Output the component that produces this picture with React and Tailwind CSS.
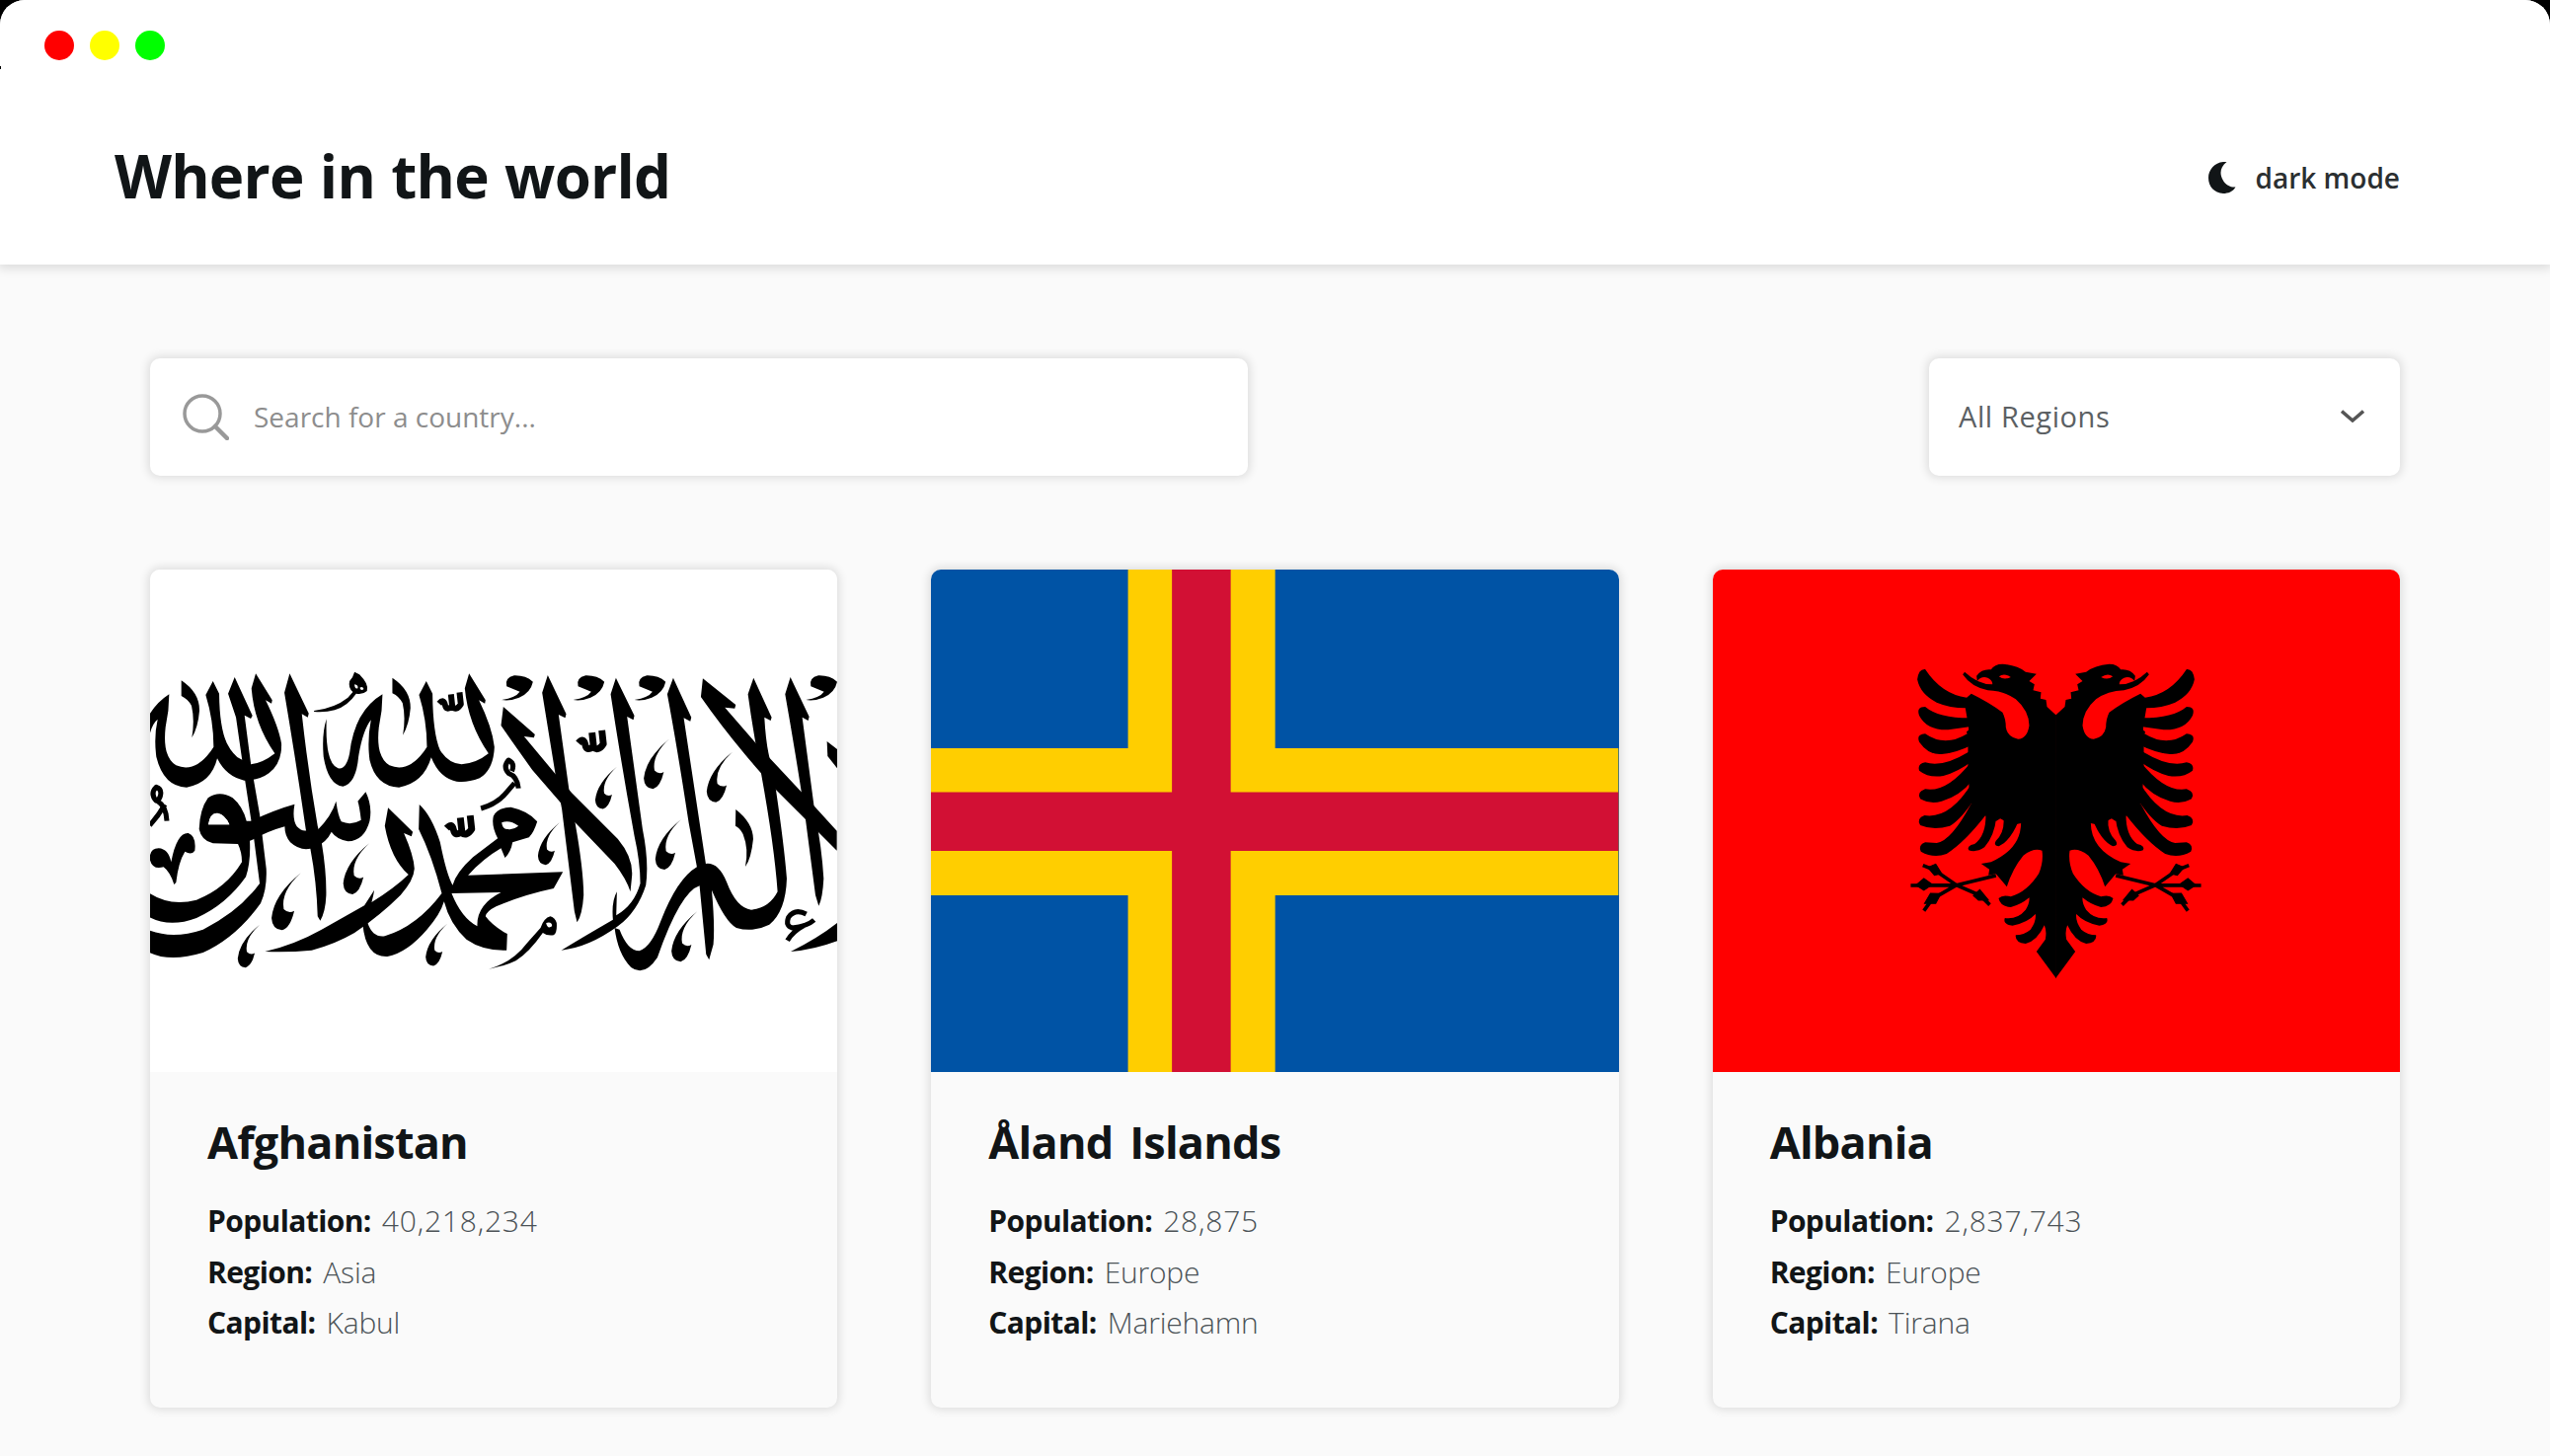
const COMMA =
  'M497 733Q435 790 445 843Q460 858 477 848Q465 900 440 907Q410 905 408 870Q415 800 497 733Z';

// x, y of the tip and scale of each comma-shaped mark
const COMMAS = [
  [497, 733, 1],
  [705, 643, 0.89],
  [372, 890, 0.75],
  [942, 887, 0.74],
  [1617, 325, 0.88],
  [1457, 410, 0.74],
  [1808, 365, 0.88],
  [1283, 580, 0.74],
  [1652, 570, 0.88],
  [1701, 850, 0.88],
];

const HOOK = 'M87 207Q130 200 142 182L102 166Q95 140 125 133Q160 132 182 152Q175 185 140 200Q110 212 87 207Z';
const DAGGER = 'M134 148Q190 185 189 240Q185 290 166 322Q175 270 165 225Q155 205 134 195Z';
const SHADDA = 'M0 36Q14 20 18 40Q22 60 40 44L36 8M38 46Q52 60 66 38L62 2';

const LEFT_STROKES = [
  'M38 250Q62 212 97 190Q97 240 86 290Q76 380 118 406Q180 432 232 350Q232 270 208 192L230 150L249 188Q250 290 272 338Q292 378 316 388L345 403Q380 400 418 370Q355 280 347 172L360 127L410 208L408 218L390 208Q430 290 438 340Q440 400 400 430Q370 452 325 452Q270 440 243 385Q225 460 150 473Q80 470 58 380Q50 320 62 266Q45 280 38 312Z',
  'M276 188L296 138L350 255L345 264L326 254L345 400L372 555L392 720Q395 780 375 825Q300 930 200 975Q100 1005 38 975L38 908Q110 935 200 905Q310 850 372 765L355 632L328 455L300 260Z',
  'M188 600Q190 540 215 505Q250 480 290 505Q320 530 332 575L345 575Q420 540 478 524Q470 570 485 592Q500 608 515 604L548 602Q590 560 604 515Q610 560 620 577Q650 590 680 572Q675 530 670 515L694 487Q715 530 706 575Q690 635 640 637Q605 630 590 608Q575 640 540 655Q500 672 465 640Q448 620 448 592Q400 605 350 632L342 635Q345 700 330 745Q270 830 180 870Q100 900 38 868L38 795Q100 835 180 815Q270 780 318 700Q318 670 306 645L230 643Q195 635 188 600ZM216 586L280 586Q268 556 243 551Q220 552 216 586Z',
  'M447 185L463 127L521 248L518 260L500 250Q520 430 548 590L560 640Q575 730 574 800Q572 850 556 878L548 865Q545 760 526 660L512 600Q480 380 447 185Z',
  'M575 265Q570 400 610 415Q635 420 645 370Q660 240 745 190Q745 240 734 290Q724 380 766 406Q828 432 880 350Q880 270 856 192L878 150L897 188Q898 310 920 360Q945 400 985 403Q1030 400 1067 370Q1005 280 995 172L1008 127L1058 208L1056 218L1038 208Q1078 290 1085 350Q1082 420 1040 445Q1000 460 970 455Q918 445 893 382Q870 460 795 473Q725 470 706 390Q698 330 710 268Q685 300 672 380Q665 460 625 470Q580 465 566 380Q560 310 575 265Z',
  'M38 690Q38 658 65 658Q95 660 103 700Q120 610 155 612Q180 620 175 665Q165 680 145 668Q125 700 118 762L112 768Q100 730 80 715Q45 725 38 690Z',
  'M752 590L762 535L837 608L833 622L810 612Q840 680 842 720Q840 755 800 800Q740 860 660 915Q600 950 530 968Q460 975 388 972Q480 950 560 905L690 832L720 785Q718 800 712 822Q780 780 824 738Q770 690 752 590Z',
  'M537 240Q600 232 640 200L655 183Q640 170 645 150Q655 140 660 122L675 130Q705 160 698 180Q685 192 665 188Q640 225 600 238Q570 246 537 243ZM660 160Q660 175 670 172Q672 162 660 160ZM676 170Q680 182 688 174Q685 164 676 170Z',
];

const RIGHT_STROKES = [
  'M-335 890L-320 885Q-305 930 -268 925Q-170 895 -95 795Q-125 680 -165 600L-163 525Q-125 560 -100 640Q-80 740 -62 770Q-50 730 0 685L75 628Q55 590 62 560Q75 535 115 533Q170 545 195 577Q185 610 170 625L120 640Q115 670 97 687L85 658Q30 690 -15 740L273 730L245 780Q150 800 70 835Q40 850 38 865Q60 895 104 918L102 968Q30 970 -20 935Q-70 890 -88 820Q-100 860 -140 905Q-200 975 -260 987Q-325 990 -335 890ZM-65 795Q-35 870 13 895Q10 830 85 792ZM87 580Q90 603 106 600Q122 603 138 590Q110 570 87 580Z',
  'M48 1025Q120 1005 165 945L205 900Q215 870 235 865Q250 870 254 885Q256 915 245 922Q225 925 212 915Q170 975 130 1000Q100 1015 48 1025ZM222 885Q226 905 240 895Q240 880 222 885Z',
  'M85 285L92 228L188 312L185 322L155 318L250 432L300 490L440 630Q490 690 482 750L478 790Q465 750 430 705L310 580L265 518L180 420Q130 350 85 285Z',
  'M210 185L227 132L283 250L280 262L260 252L293 490L310 580Q335 720 336 800Q332 860 316 883L308 850L270 540L250 432Z',
  'M418 190L434 140L490 255L487 268L468 258L515 600Q535 700 525 770Q500 850 440 895Q350 960 268 968Q330 930 425 875Q420 820 437 790L435 862Q490 830 508 765Q508 700 490 620Q450 400 418 190Z',
  'M430 900L445 905Q470 970 505 970Q540 960 570 880Q620 750 680 715L655 580Q620 350 590 190L608 140L663 260L660 272L640 262L707 705Q745 700 770 760Q800 840 845 845Q900 840 925 790Q915 650 875 430Q850 300 835 190L852 140L907 260L904 270L885 260Q890 350 905 400L920 480Q945 650 953 750Q950 850 900 890Q850 915 800 900Q765 880 725 785Q735 890 730 950L717 997L708 980L688 772Q630 790 560 990Q520 1050 480 1020Q440 980 430 900Z',
  'M692 198L698 142L798 222L795 233L765 230L862 342L1000 490L1105 605L1105 665L1010 570L920 480L875 430Q770 310 692 198Z',
  'M948 190L964 138L1021 258L1018 270L1000 260L1037 540Q1060 660 1065 750Q1062 810 1050 833L1040 800L1010 570Q985 400 948 190Z',
  'M1075 333L1110 360V420L1077 378Z',
  'M798 540Q850 580 851 630Q845 690 827 714Q838 660 820 615Q810 595 797 590Z',
  'M965 972Q1050 930 1110 882V938Q1040 965 965 972Z',
];

const FINE_LINES = [
  'M90 575Q88 530 62 515M84 525Q64 560 38 588M58 514Q38 492 58 472Q76 478 70 500Q66 512 58 514Z',
  'M1044 537Q1095 522 1122 488L1146 460M1158 476Q1155 440 1128 430Q1110 410 1128 390Q1148 400 1138 424',
  'M2032 858Q1998 840 1978 868Q1968 895 1990 900Q2035 895 2056 876M2026 892Q1990 912 1975 938',
];

function AfghanistanFlag() {
  return (
    <svg viewBox="0 0 696 509" preserveAspectRatio="none" className="block h-full w-full bg-white">
      <g transform="translate(-13 63) scale(.33333)" fillRule="evenodd" fill="#000">
        {LEFT_STROKES.map((d) => <path key={d} d={d} fillRule="nonzero" />)}
        <path d="M216 586L280 586Q268 556 243 551Q220 552 216 586Z" fill="#fff" />
        <path d={DAGGER} />
        <path d={DAGGER} transform="translate(641 -8)" />
        {COMMAS.map(([x, y, s]) => (
          <path key={`${x}-${y}`} d={COMMA} transform={`translate(${x} ${y}) scale(${s}) translate(-497 -733)`} />
        ))}
        <g transform="translate(1020 0)">
          {RIGHT_STROKES.map((d) => <path key={d} d={d} />)}
          {[0, 217, 403, 924].map((x) => <path key={x} d={HOOK} transform={`translate(${x} 0)`} />)}
        </g>
        <g fill="none" stroke="#000" strokeWidth="15" strokeLinejoin="round">
          {FINE_LINES.map((d) => <path key={d} d={d} />)}
          <g strokeWidth="18">
            <path d={SHADDA} transform="translate(917 182)" />
            <path d={SHADDA} transform="translate(940 556) scale(1.15)" />
            <path d={SHADDA} transform="translate(1340 297) scale(1.15)" />
          </g>
        </g>
      </g>
    </svg>
  );
}

function AlandFlag() {
  return (
    <svg viewBox="0 0 696 509" preserveAspectRatio="none" className="block h-full w-full bg-[#0053a5]">
      <path d="M199.5 0H348.5V181H696V330H348.5V509H199.5V330H0V181H199.5Z" fill="#ffce00" />
      <path d="M244 0H303.5V225.5H696V285H303.5V509H244V285H0V225.5H244Z" fill="#d21034" />
    </svg>
  );
}

const EAGLE = [
  'M548 252L546 252L520 228L517 207L500 203L502 184L478 178L482 160L466 150L488 128L455 122Q430 102 385 98Q360 98 350 115Q322 112 306 134L308 150Q320 134 340 140Q356 148 354 160Q310 160 270 122L264 130Q290 168 340 178Q390 180 425 205Q465 240 466 285Q460 325 432 326Q400 320 395 290Q395 265 385 245Q345 215 290 188L276 200Q200 190 150 114Q130 112 126 145Q135 190 185 215Q225 232 272 232L282 290L280 350L280 410L283 470L292 530L335 560L345 572L366 575L378 568L392 575L400 590L430 584L441 582Q440 660 350 700L320 705L345 722L342 740L365 736L398 775Q415 720 448 680Q480 655 505 665Q510 700 495 735Q460 790 410 805Q385 798 373 810Q378 835 410 837Q440 830 466 808Q468 825 455 845Q430 875 392 870Q385 890 415 893Q460 885 485 858Q488 880 470 905Q450 922 425 922Q422 945 455 948Q490 940 512 892Q520 910 515 935L488 972L547 1052L548 1052Z',
  'M285 262Q190 262 150 228Q122 228 132 255Q155 300 220 298L290 288Z',
  'M290 296Q270 302 278 310Q210 352 150 310Q122 312 132 335Q160 375 200 372Q245 368 290 345Z',
  'M290 360Q205 415 150 397Q125 402 132 422Q160 445 205 438Q250 425 290 395Z',
  'M290 395Q215 490 150 478Q122 488 135 508Q165 525 200 515Q255 500 295 450Z',
  'M292 460Q225 570 148 558Q122 568 135 588Q175 605 225 590Q260 570 305 500Z',
  'M290 522Q230 635 185 642L150 640Q128 648 137 668Q175 690 215 675Q270 640 335 556Z',
  'M334 556Q335 620 300 645Q275 650 282 664Q305 672 330 655Q360 620 366 566Z',
  'M388 566Q392 610 365 635Q356 650 374 652Q410 635 434 574Z',
];

function EagleHalf() {
  return (
    <g>
      {EAGLE.map((d) => <path key={d} d={d} />)}
      <path d="M374 136Q390 124 410 138Q390 148 374 136Z" fill="red" />
      <path d="M365 741L245 770L106 771M143 710L178 724L245 770L318 802L346 830M245 770L172 812L146 848" fill="none" stroke="#000" strokeWidth="11" />
      <path d="M158 716L182 706L200 735L178 740ZM122 770L146 750L172 768L146 786ZM148 826L166 795L198 796L182 826ZM296 802L316 784L342 815L312 816Z" stroke="#000" strokeWidth="3" />
    </g>
  );
}

function AlbaniaFlag() {
  return (
    <svg viewBox="0 0 696 509" preserveAspectRatio="none" className="block h-full w-full bg-[#ff0000]">
      <g transform="translate(165 63) scale(.33333)">
        <EagleHalf />
        <g transform="translate(1094 0) scale(-1 1)"><EagleHalf /></g>
      </g>
    </svg>
  );
}

const COUNTRIES = [
  { name: 'Afghanistan', population: '40,218,234', region: 'Asia', capital: 'Kabul', Flag: AfghanistanFlag },
  { name: 'Åland Islands', population: '28,875', region: 'Europe', capital: 'Mariehamn', Flag: AlandFlag },
  { name: 'Albania', population: '2,837,743', region: 'Europe', capital: 'Tirana', Flag: AlbaniaFlag },
];

function Fact({ label, children, numeric }) {
  return (
    <p className="flex h-[51.6px] items-center gap-[11px] whitespace-nowrap text-[30px]">
      <span className="font-bold tracking-[-0.6px]">{label}:</span>
      <span className={numeric ? 'font-light tracking-[0.8px] text-[#4b5256]' : 'font-light tracking-[-0.2px] text-[#4b5256]'}>{children}</span>
    </p>
  );
}

function CountryCard({ country }) {
  const { name, population, region, capital, Flag } = country;
  return (
    <article className="h-[849px] overflow-hidden rounded-[10px] bg-[#fafafa] shadow-[0_0_10px_2px_rgba(0,0,0,0.12)]">
      <div className="h-[509px]"><Flag /></div>
      <div className="px-[58px] pt-[41px]">
        <h2 className="mb-[24px] whitespace-nowrap text-[45px] leading-[60px] font-bold tracking-[-0.8px] [word-spacing:6px]">{name}</h2>
        <Fact label="Population" numeric>{population}</Fact>
        <Fact label="Region">{region}</Fact>
        <Fact label="Capital">{capital}</Fact>
      </div>
    </article>
  );
}

export default function App() {
  return (
    <div className="h-[1475px] w-[2583px] overflow-hidden bg-black font-['Open_Sans',sans-serif] text-[#111517]">
      <div className="h-full overflow-hidden rounded-t-[25px] bg-[#fafafa]">
        <header className="relative h-[268px] bg-white shadow-[0_2px_10px_2px_rgba(0,0,0,0.12)]">
          <span className="absolute top-[67px] left-0 h-[3px] w-px bg-black" />
          <div className="flex h-[92px] items-center gap-4 pl-[45px]">
            <span className="size-[30px] rounded-full bg-[#ff0000]" />
            <span className="size-[30px] rounded-full bg-[#ffff00]" />
            <span className="size-[30px] rounded-full bg-[#00ff00]" />
          </div>
          <div className="flex h-[176px] items-center justify-between pr-[152px] pl-[116px]">
            <h1 className="pb-[5px] text-[60px] leading-[80px] font-bold tracking-[-0.8px] [word-spacing:1.5px]">Where in the world</h1>
            <button className="flex items-center gap-[20px] text-[28px] font-semibold text-[#2b2f31]">
              <svg viewBox="0 0 28 32" className="h-[32px] w-[28px]">
                <path d="M18.5 0C12 5 11 12 14.500 18C17.500 24 23 26 27.500 25.500C25 30 20 32 15 32C6 31.500 0 25 0 16C0 7 8 -1 18.500 0Z" fill="#111517" />
              </svg>
              dark mode
            </button>
          </div>
        </header>
        <main className="px-[152px] pt-[95px]">
          <div className="flex h-[119px] items-stretch justify-between text-[28px]">
            <label className="flex w-[1112px] items-center gap-[25px] rounded-[10px] bg-white pl-[33px] shadow-[0_0_10px_2px_rgba(0,0,0,0.12)]">
              <svg viewBox="0 0 47 47" className="h-[47px] w-[47px]" fill="none" stroke="#999" strokeWidth="3.500">
                <circle cx="20" cy="20" r="18" />
                <path d="M33 33L45 45" strokeWidth="4.500" strokeLinecap="round" />
              </svg>
              <span className="pb-[2px] text-[#8d8d8d]">Search for a country...</span>
            </label>
            <div className="flex w-[477px] items-center justify-between rounded-[10px] bg-white pr-[36px] pb-[2px] pl-[30px] text-[29px] tracking-[0.6px] text-[#5b6063] shadow-[0_0_10px_2px_rgba(0,0,0,0.12)]">
              <span>All Regions</span>
              <svg viewBox="0 0 24 13" className="h-[13px] w-[24px]" fill="none" stroke="#555" strokeWidth="3.500">
                <path d="M1 1.500L12 11L23 1.500" />
              </svg>
            </div>
          </div>
          <section className="mt-[95px] grid grid-cols-3 gap-[95px]">
            {COUNTRIES.map((c) => <CountryCard key={c.name} country={c} />)}
          </section>
        </main>
      </div>
    </div>
  );
}
